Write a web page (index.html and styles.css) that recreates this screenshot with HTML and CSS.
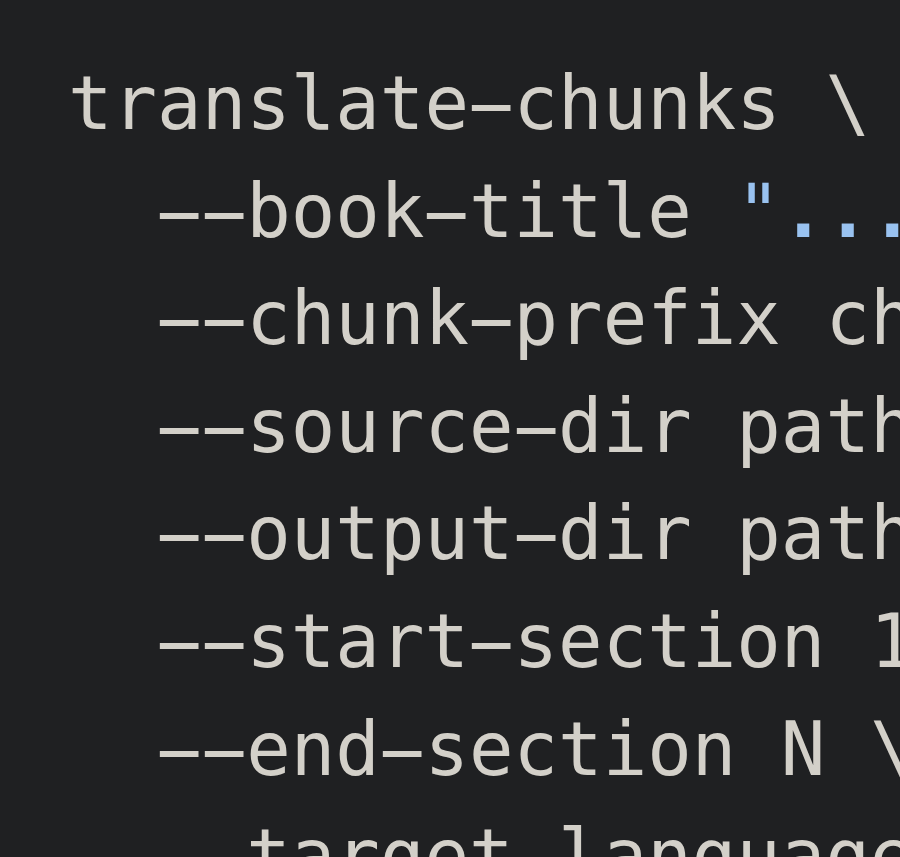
FILE: index.html
```html
<!DOCTYPE html>
<html lang="en">
<head>
<meta charset="utf-8">
<title>translate-chunks</title>
<link rel="stylesheet" href="styles.css">
</head>
<body>
<pre class="code"><code><span class="line">translate<span class="h">-</span>chunks \</span>
<span class="line">  <span class="h">-</span><span class="h">-</span>book<span class="h">-</span>title <span class="str">"<span class="dots">...</span>"</span> \</span>
<span class="line">  <span class="h">-</span><span class="h">-</span>chunk<span class="h">-</span>prefix chunk \</span>
<span class="line">  <span class="h">-</span><span class="h">-</span>source<span class="h">-</span>dir path/to/source \</span>
<span class="line">  <span class="h">-</span><span class="h">-</span>output<span class="h">-</span>dir path/to/output \</span>
<span class="line">  <span class="h">-</span><span class="h">-</span>start<span class="h">-</span>section 1 \</span>
<span class="line">  <span class="h">-</span><span class="h">-</span>end<span class="h">-</span>section N \</span>
<span class="line">  <span class="h">-</span><span class="h">-</span>target<span class="h">-</span>language ...</span></code></pre>
</body>
</html>
```
FILE: styles.css
```css
html, body {
  margin: 0;
  padding: 0;
  background: #1f2022;
  height: 100%;
  overflow: hidden;
}

.code {
  margin: 0;
  padding: 50px 0 0 68px;
  font-family: "DejaVu Sans Mono", "Liberation Mono", monospace;
  font-size: 74px;
  line-height: 107.6px;
  color: #d3d0c9;
  white-space: pre;
}

.code code {
  font: inherit;
}

.h {
  display: inline-block;
  transform: scaleX(2.05);
  transform-origin: 50% 50%;
}

.str {
  color: #99c2f0;
}

.dots {
  font-weight: bold;
}
```
